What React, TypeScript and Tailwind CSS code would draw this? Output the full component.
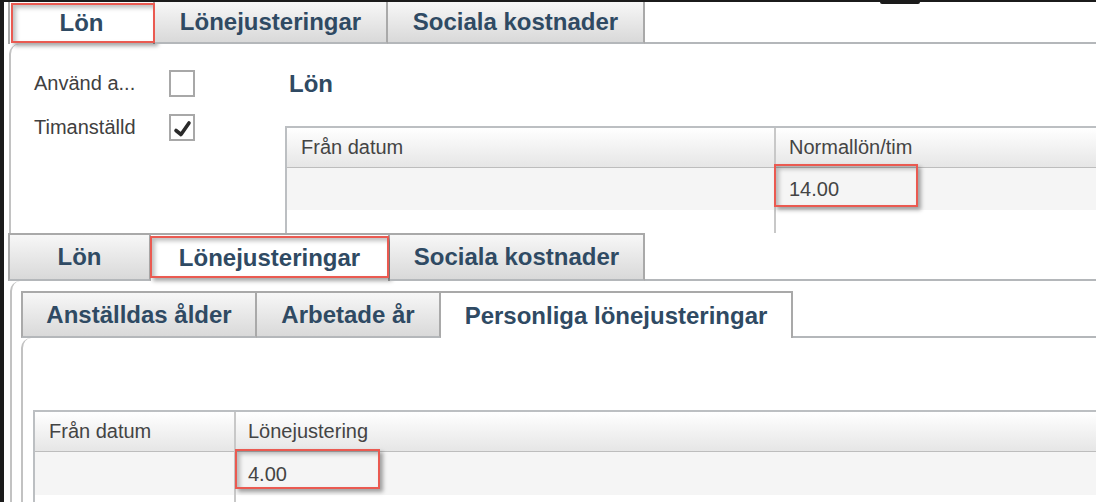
import React from "react";
import clsx from "clsx";

type TabProps = {
  label: string;
  className: string;
  active?: boolean;
  mark?: string;
};

// red annotation box with a soft drop shadow on its stroke
const RedMark: React.FC<{ className: string }> = ({ className }) => (
  <div
    className={clsx(
      "absolute pointer-events-none border-2 border-[#ea5a51] shadow-[3px_3px_4px_rgba(0,0,0,0.35),inset_3px_3px_4px_rgba(0,0,0,0.25)]",
      className
    )}
  />
);

const Tab: React.FC<TabProps> = ({ label, className, active, mark }) => (
  <div
    className={clsx(
      "relative flex items-center justify-center shrink-0 border-[#a9a9a9]",
      active
        ? "bg-white"
        : "bg-linear-to-b from-[#f7f7f7] to-[#d9d9d9] border-b-2 border-b-[#b4b7ba]",
      className
    )}
  >
    <span className="text-[24px] font-bold text-[#2f4a63] leading-[28px]">
      {label}
    </span>
    {mark && <RedMark className={mark} />}
  </div>
);

const Checkbox: React.FC<{ checked?: boolean }> = ({ checked }) => (
  <div className="w-[26px] h-[27px] border-2 border-[#a8a8a8] bg-white flex items-center justify-center">
    {checked && (
      <svg width="22" height="23" viewBox="0 0 22 23">
        <path
          d="M5 14.5 L10 18.5 L18 7"
          fill="none"
          stroke="#2a2a2a"
          strokeWidth="3.6"
          strokeLinecap="round"
          strokeLinejoin="round"
        />
      </svg>
    )}
  </div>
);

const App: React.FC = () => {
  return (
    <div className="relative w-[1096px] h-[502px] overflow-hidden bg-white flex flex-col font-['Liberation_Sans',Arial,sans-serif]">
      <div className="h-[2px] shrink-0 bg-[#1b1b1b]" />
      <div className="absolute top-0 left-[880px] w-[40px] h-[4px] bg-[#1b1b1b] rounded-b-[2px]" />

      <div className="flex flex-1 min-h-0">
        <div className="w-[4px] shrink-0 bg-[#1b1b1b]" />

        <div className="flex-1 min-w-0 flex flex-col">
          {/* first capture: Lön tab */}
          <section className="h-[231px] shrink-0 flex flex-col">
            <div className="flex h-[42px] shrink-0 pl-[4px]">
              <Tab
                label="Lön"
                active
                className="w-[147px] border-l-2 border-r-2"
                mark="left-[1px] top-[1px] w-[144px] h-[40px]"
              />
              <Tab label="Lönejusteringar" className="w-[233px] border-r-2" />
              <Tab label="Sociala kostnader" className="w-[257px] border-r-2" />
              <div className="flex-1 border-b-2 border-[#b4b7ba]" />
            </div>

            <div className="flex-1 ml-[5px] border-l-2 border-[#c2c2c2] rounded-tl-[10px] flex">
              <div className="w-[274px] shrink-0 pl-[23px] pt-[26px] flex flex-col gap-[17px] text-[20px] leading-[27px] text-[#404040]">
                <div className="flex items-center">
                  <span className="w-[135px]">Använd a...</span>
                  <Checkbox />
                </div>
                <div className="flex items-center">
                  <span className="w-[135px]">Timanställd</span>
                  <Checkbox checked />
                </div>
              </div>

              <div className="flex-1 min-w-0 flex flex-col">
                <h2 className="pl-[4px] pt-[26px] text-[24px] leading-[28px] font-bold text-[#2f4a63]">
                  Lön
                </h2>
                <div className="mt-[28px] flex-1 flex border-t-2 border-l-2 border-[#bcbfc2] text-[20px] leading-[24px] text-[#444]">
                  <div className="w-[487px] shrink-0 flex flex-col">
                    <div className="h-[40px] pl-[14px] pb-[2px] flex items-center border-b border-[#bdbdbd] bg-linear-to-b from-white to-[#e6e6e6]">
                      Från datum
                    </div>
                    <div className="h-[42px] bg-[#f5f5f5]" />
                  </div>
                  <div className="flex-1 flex flex-col border-l-2 border-[#c8c8c8]">
                    <div className="h-[40px] pl-[13px] pb-[2px] flex items-center border-b border-[#bdbdbd] bg-linear-to-b from-white to-[#e6e6e6]">
                      Normallön/tim
                    </div>
                    <div className="relative h-[42px] pl-[13px] flex items-center bg-[#f5f5f5]">
                      14.00
                      <RedMark className="left-[-2px] top-[-4px] w-[144px] h-[43px]" />
                    </div>
                  </div>
                </div>
              </div>
            </div>
          </section>

          {/* second capture: Lönejusteringar tab */}
          <section className="flex-1 min-h-0 flex flex-col">
            <div className="flex h-[48px] shrink-0 pl-[4px]">
              <Tab label="Lön" className="w-[143px] border-l-2 border-r-2 border-t-2" />
              <Tab
                label="Lönejusteringar"
                active
                className="w-[239px] border-r-2 border-t-2"
                mark="left-[-1px] top-[1px] w-[239px] h-[42px]"
              />
              <Tab label="Sociala kostnader" className="w-[255px] border-r-2 border-t-2" />
              <div className="flex-1 border-b-2 border-[#b4b7ba]" />
            </div>

            <div className="flex-1 min-h-0 ml-[6px] border-l-2 border-[#c2c2c2] rounded-tl-[10px] pl-[9px] pt-[10px] flex flex-col">
              <div className="flex h-[47px] shrink-0">
                <Tab
                  label="Anställdas ålder"
                  className="w-[236px] border-l-2 border-r-2 border-t-2"
                />
                <Tab label="Arbetade år" className="w-[184px] border-r-2 border-t-2" />
                <Tab
                  label="Personliga lönejusteringar"
                  active
                  className="w-[352px] border-r-2 border-t-2"
                />
                <div className="flex-1 border-b-2 border-[#b4b7ba]" />
              </div>

              <div className="flex-1 min-h-0 border-l-2 border-[#c2c2c2] rounded-tl-[10px] pl-[10px] pt-[72px] flex flex-col">
                <div className="flex-1 flex border-t-2 border-l-2 border-[#bcbfc2] text-[20px] leading-[24px] text-[#444]">
                  <div className="w-[199px] shrink-0 flex flex-col">
                    <div className="h-[40px] pl-[14px] pb-[2px] flex items-center border-b border-[#bdbdbd] bg-linear-to-b from-white to-[#e6e6e6]">
                      Från datum
                    </div>
                    <div className="h-[43px] bg-[#f5f5f5]" />
                  </div>
                  <div className="flex-1 flex flex-col border-l-2 border-[#c8c8c8]">
                    <div className="h-[40px] pl-[12px] pb-[2px] flex items-center border-b border-[#bdbdbd] bg-linear-to-b from-white to-[#e6e6e6]">
                      Lönejustering
                    </div>
                    <div className="relative h-[43px] pl-[12px] flex items-center bg-[#f5f5f5]">
                      4.00
                      <RedMark className="left-[-1px] top-[-3px] w-[145px] h-[40px]" />
                    </div>
                  </div>
                </div>
              </div>
            </div>
          </section>
        </div>
      </div>
    </div>
  );
};

export default App;
